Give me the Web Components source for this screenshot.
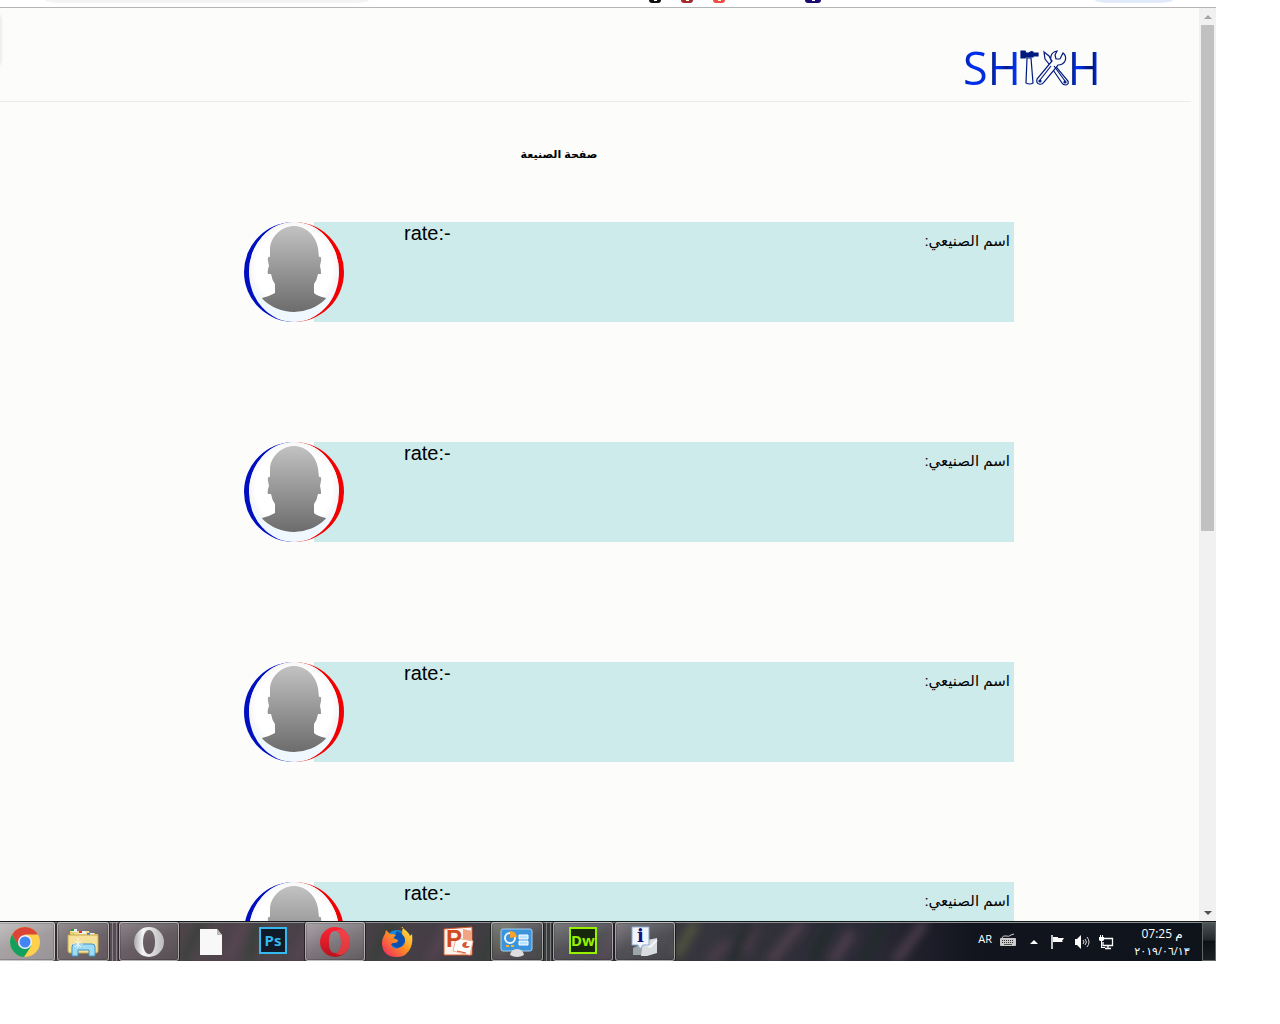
<!DOCTYPE html>
<html lang="ar">
<head>
<meta charset="utf-8">
<title>صفحة الصنيعة</title>
<style>
body { margin: 0; padding-right: 64px; background: #fff; font-family: "Liberation Sans", "DejaVu Sans", sans-serif; color: #000; }
</style>
</head>
<body>
<desktop-screen>
  <browser-strip slot="top"></browser-strip>
  <web-page slot="page">
    <site-header></site-header>
    <page-title>صفحة الصنيعة</page-title>
    <worker-list>
      <worker-card><span slot="name">اسم الصنيعي:</span><span slot="rate">rate:-</span></worker-card>
      <worker-card><span slot="name">اسم الصنيعي:</span><span slot="rate">rate:-</span></worker-card>
      <worker-card><span slot="name">اسم الصنيعي:</span><span slot="rate">rate:-</span></worker-card>
      <worker-card><span slot="name">اسم الصنيعي:</span><span slot="rate">rate:-</span></worker-card>
    </worker-list>
  </web-page>
  <scroll-bar slot="scroll"></scroll-bar>
  <task-bar slot="taskbar">
    <task-button icon="chrome" label="Chrome" look="active"></task-button>
    <task-button icon="explorer" label="Explorer" look="stack"></task-button>
    <task-button icon="operagrey" label="Opera Developer" look="open"></task-button>
    <task-button icon="file" label="File"></task-button>
    <task-button icon="ps" label="Photoshop"></task-button>
    <task-button icon="opera" label="Opera" look="bright"></task-button>
    <task-button icon="firefox" label="Firefox"></task-button>
    <task-button icon="ppt" label="PowerPoint"></task-button>
    <task-button icon="panel" label="Control Panel" look="stack"></task-button>
    <task-button icon="dw" label="Dreamweaver" look="open"></task-button>
    <task-button icon="info" label="Information" look="open"></task-button>
    <system-tray slot="tray"></system-tray>
  </task-bar>
</desktop-screen>
<script>
const define = (name, html) => customElements.define(name, class extends HTMLElement {
  constructor() { super(); this.attachShadow({ mode: 'open' }); }
  connectedCallback() {
    this.shadowRoot.innerHTML = typeof html === 'function' ? html(this) : html;
  }
});

define('desktop-screen', `
<style>
:host { display: flex; flex-direction: column; height: calc(100vh - 63px); overflow: hidden; }
.window { display: flex; flex: 1; min-height: 0; }
.page { flex: 1; min-width: 0; overflow: hidden; background: #fcfcfa; }
</style>
<slot name="top"></slot>
<div class="window"><div class="page"><slot name="page"></slot></div><slot name="scroll"></slot></div>
<slot name="taskbar"></slot>`);

define('browser-strip', `
<style>
:host { display: flex; justify-content: space-between; height: 7px; border-bottom: 1px solid #b5b5b5; background: #fff; flex: none; }
.left, .marks { display: flex; }
.pill { height: 3px; border-radius: 0 0 16px 16px / 0 0 3px 3px; background: #f1f3f4; }
.url { width: 324px; margin-left: 45px; }
.user { width: 78px; margin-right: 43px; background: #e1eaf8; }
.marks { margin-left: 280px; gap: 20px; }
i { width: 12px; height: 3px; border-radius: 0 0 3px 3px; background: linear-gradient(#fff, #fff) center top / 3px 1px no-repeat var(--c); }
i.wide { width: 16px; margin-left: 60px; }
</style>
<div class="left"><div class="pill url"></div>
<div class="marks"><i style="--c:#111"></i><i style="--c:#a52a2a"></i><i style="--c:#f04e3e"></i><i class="wide" style="--c:#1d0a72"></i></div></div>
<div class="pill user"></div>`);

define('web-page', `
<style>
:host { display: block; position: relative; padding-right: 8px; }
.drawer { position: absolute; left: -10px; top: 8px; width: 10px; height: 48px; box-shadow: 0 0 4px rgba(0,0,0,.15); }
</style>
<div class="drawer"></div><slot></slot>`);

define('site-header', `
<style>
:host { display: flex; justify-content: flex-end; border-bottom: 1px solid #ebebeb; padding: 29px 90px 3px 0; }
.logo { display: flex; align-items: center; font: 500 45px/61px "Open Sans", sans-serif; }
span { background: linear-gradient(90deg, #001a9a, #0030f5 15%, #0028d0 45%, #001470 50%, #0034ff 57%, #001a90 75%, #0034ff 92%, #0034ff); -webkit-background-clip: text; background-clip: text; color: transparent; }
.end { background-image: linear-gradient(90deg, #001470 12%, #0034ff 24%, #001a90 60%, #001470 76%, #0034ff 88%); }
svg { display: block; margin: 1px -4px 0 -1px; }
</style>
<div class="logo"><span>SH</span>
<svg width="52" height="36" viewBox="0 0 52 36" fill="none" stroke="#001a80" stroke-width="1.2">
<path fill="#001a80" d="M1 1h4l1 2h3q2-2 4-1v1h5v3h-5v1H6L5 8H1z"/>
<path d="M7 8h4l2 25q-3 2-7 0z"/>
<path fill="#fcfcfa" d="M24 2l5 4 3 6 16 19q1 3-2 4-3 0-4-2L29 14l-4-5z"/>
<path fill="#fcfcfa" d="M37 1q-5 1-6 5-1 3 1 5L17 29q-1 4 2 5 3 1 5-2l14-17q5 0 7-4 2-5-2-8l-3 6-4 0-1-4z"/>
<path d="M20 30l11-14M34 16l11 15"/><circle cx="20" cy="31" r="1" fill="#001a80"/><circle cx="45" cy="32" r="1" fill="#001a80"/>
</svg><span class="end">H</span></div>`);

define('page-title', `
<style>
:host { display: block; padding: 42px 73px 0 0; }
h1 { margin: 0; text-align: center; font-size: 11px; line-height: 20px; font-weight: bold; }
</style>
<h1 dir="rtl"><slot></slot></h1>`);

define('worker-list', `
<style>
:host { display: flex; flex-direction: column; gap: 120px; padding: 58px 177px 0 0; align-items: flex-end; }
</style><slot></slot>`);

define('worker-card', `
<style>
:host { display: flex; }
.avatar { box-sizing: border-box; width: 100px; height: 100px; margin-right: -30px; border: 0 solid; border-width: 0 5px; border-color: #0010c0 #f00000 #f00000 #0010c0; border-radius: 50%; background: #f0f8ff; position: relative; overflow: hidden; }
svg { display: block; border-radius: 50%; }
.bar { box-sizing: border-box; display: flex; justify-content: space-between; align-items: flex-start; width: 700px; height: 100px; padding: 0 4px 0 90px; background: #ceebeb; }
.rate { font-size: 20px; line-height: 23px; }
.name { font-size: 15px; line-height: 24px; padding-top: 7px; }
</style>
<div class="avatar"><svg width="90" height="90" viewBox="0 0 90 90">
<defs><linearGradient id="g" x2="0" y2="1"><stop stop-color="#c2c2c2"/><stop offset="1" stop-color="#6c6c6c"/></linearGradient>
<radialGradient id="w"><stop offset=".85" stop-color="#fff"/><stop offset="1" stop-color="#f5f5f5"/></radialGradient></defs>
<rect width="90" height="90" fill="url(#w)"/>
<path fill="url(#g)" d="M45 4C33 4 22 14 21 26l0 9q-3-1-2 4l1 5q-2 5-1 8l3 0q1 6 4 10v9q-5 3-13 5l5 14h54l5-14q-9-2-12-5v-9q3-4 4-10l3 0q0-5-1-8l1-5q1-5-2-4l-1-9C67 14 57 4 45 4z"/>
</svg></div>
<div class="bar"><div class="rate"><slot name="rate"></slot></div><div class="name" dir="rtl"><slot name="name"></slot></div></div>`);

define('scroll-bar', `
<style>
:host { display: flex; flex-direction: column; width: 17px; background: #f1f1f1; }
button { height: 17px; border: 0; padding: 0; background: none; display: flex; align-items: center; justify-content: center; }
.track { flex: 1; padding: 0 2px; }
.thumb { height: 57.6%; background: #c1c1c1; }
</style>
<button aria-label="Up"><svg width="8" height="4"><path d="M4 0l4 4H0z" fill="#a3a3a3"/></svg></button>
<div class="track"><div class="thumb"></div></div>
<button aria-label="Down"><svg width="8" height="4"><path d="M0 0h8L4 4z" fill="#505050"/></svg></button>`);

define('task-bar', `
<style>
:host { box-sizing: border-box; display: flex; justify-content: space-between; height: 40px; flex: none; overflow: hidden; position: relative; border-top: 1px solid #15181a; background: #2b2a33; color: #fff; }
.back { position: absolute; inset: 0; width: 100%; height: 100%; }
.items { display: flex; gap: 2px; margin-left: -5px; position: relative; }
.tray { display: flex; position: relative; }
</style>
<svg class="back" preserveAspectRatio="none" viewBox="0 0 1216 39">
<defs><linearGradient id="b"><stop stop-color="#6c6568"/><stop offset=".12" stop-color="#51464c"/><stop offset=".35" stop-color="#453e45"/><stop offset=".52" stop-color="#3a3a40"/><stop offset=".72" stop-color="#2b2a36"/><stop offset=".8" stop-color="#12141e"/><stop offset="1" stop-color="#0e141b"/></linearGradient>
<filter id="f" x="-10%" y="-50%" width="120%" height="200%"><feGaussianBlur stdDeviation="5"/></filter></defs>
<rect width="1216" height="40" fill="url(#b)"/>
<g filter="url(#f)" stroke-width="9" opacity=".75">
<path stroke="#304034" d="M182 40l20-40M248 40l10-40M372 40l20-40M480 40l20-40M540 40l15-40"/>
<path stroke="#5c4656" d="M115 40l8-40M225 40l20-40M295 40l20-40M430 40l20-40M770 40l32-40M832 40l20-30M895 40l30-40"/>
<path stroke="#5f613f" d="M676 34l20-34M500 30l10-30"/>
<path stroke="#544050" d="M708 40l20-20M745 30l10-30M602 40l20-40"/>
<path stroke="#1d2a26" d="M730 40l22-40M810 40l22-40M862 40l22-40"/>
</g><path d="M0 .500h1216" stroke="#8a8f90"/></svg>
<div class="items"><slot></slot></div><div class="tray"><slot name="tray"></slot></div>`);

const icons = {
chrome: `<svg width="32" height="32" viewBox="0 0 32 32"><circle cx="16" cy="16" r="15" fill="#ffd04b"/><path d="M3 8.500A15 15 0 0 1 29 8.500H16L9.500 20z" fill="#db4437"/><path d="M3 8.500A15 15 0 0 0 15 31l7.500-11.500-13 0z" fill="#13a05f"/><circle cx="16" cy="16" r="7" fill="#eef3f8"/><circle cx="16" cy="16" r="5.500" fill="#4285f4"/></svg>`,
explorer: `<svg width="34" height="32" viewBox="0 0 34 32"><path d="M4 5h9l2 2h14v18H4z" fill="#e6cc73"/><path d="M13 5h10l1 3h8v18H8V7z" fill="#f0dc91"/><path d="M5 3h6v3H5z" fill="#eee"/><path d="M5 3h3v2H5z" fill="#13a31b"/><path d="M13 5h7v3h-7z" fill="#eee"/><path d="M13 5h3v2h-3z" fill="#d33"/><path d="M21 7h7v3h-7z" fill="#eee"/><path d="M21 7h3v2h-3z" fill="#28d"/><path d="M2 9h30v16q0 2-2 2H4q-2 0-2-2z" fill="#f5e19a" stroke="#caa84e"/><path d="M6 30v-9q0-3 3-3h17q3 0 3 3v9h-6v-6H12v6z" fill="#9fdcf4" stroke="#3b95c4"/><path d="M12 12v10M7 18h10M9 15l6 6M15 15l-6 6" stroke="#fff" opacity=".8"/></svg>`,
operagrey: `<svg width="32" height="32" viewBox="0 0 32 32"><defs><linearGradient id="o" x2="1"><stop stop-color="#aaa"/><stop offset=".3" stop-color="#f6f6f6"/><stop offset="1" stop-color="#bbb"/></linearGradient></defs><path fill-rule="evenodd" fill="url(#o)" d="M16 1a15 15 0 1 0 0 30 15 15 0 1 0 0-30zM16 4C20 4 22 10 22 16S20 28 16 28 10 22 10 16 12 4 16 4z"/></svg>`,
file: `<svg width="24" height="28" viewBox="0 0 24 28"><path d="M1 1h17l5 6v20H1z" fill="#f8f8f8"/><path d="M18 1v6h5z" fill="#bbb"/></svg>`,
ps: `<b class="sq" style="--b:#35b9ee;--g:#101a29">Ps</b>`,
dw: `<b class="sq" style="--b:#96f000;--g:#17280e">Dw</b>`,
opera: `<svg width="32" height="32" viewBox="0 0 32 32"><defs><linearGradient id="o" x2="0" y2="1"><stop stop-color="#ff2535"/><stop offset="1" stop-color="#b8121e"/></linearGradient></defs><path fill-rule="evenodd" fill="url(#o)" d="M16 1a15 15 0 1 0 0 30 15 15 0 1 0 0-30zM16 5C21 5 22 11 22 16S21 27 16 27 10 21 10 16 11 5 16 5z"/><path fill="#f55b5b" opacity=".5" d="M16 5q6-4 11 1 4 4 4 10t-5 11q-5 4-10 0c5 0 6-6 6-11S21 5 16 5z"/></svg>`,
firefox: `<svg width="32" height="32" viewBox="0 0 32 32"><defs><linearGradient id="f" x1="1" x2="0" y2="1"><stop stop-color="#fff04a"/><stop offset=".45" stop-color="#ff9520"/><stop offset="1" stop-color="#f01e68"/></linearGradient></defs><circle cx="16" cy="15" r="11" fill="#1486dc"/><path fill="#0c4fae" d="M16 5q8 3 9 10l-7 8-8-4z"/><path fill="url(#f)" d="M20 1q7 4 9 9l2-2q1 8-1 13-4 10-14 10Q2 31 1 18q0-6 3-10l1-4 4 4q4 0 6 1l-3 3 5 2q0 3-4 3-2 0-3 1 2 6 7 4 4-1 6-3 3-6-2-11 0-4 1-7z"/></svg>`,
ppt: `<svg width="32" height="32" viewBox="0 0 32 32"><path d="M1 3l28-2v28H1z" fill="#fdf4ee" stroke="#d8572c"/><path d="M20 3l9 2v12H20z" fill="#f2a585"/><path d="M13 12l17 3-3 14-17-4z" fill="#fff" stroke="#f0b090"/><path d="M24 16a4 3 0 1 0 3 4h-4z" fill="#d8572c"/><path d="M14 25l9 2" stroke="#d8572c"/><text x="3" y="21" font-family="Liberation Sans" font-weight="bold" font-size="24" fill="#d14a1e">P</text></svg>`,
panel: `<svg width="34" height="32" viewBox="0 0 34 32"><rect x="1" y="3" width="31" height="22" rx="2" fill="#3b94dc" stroke="#9fd2f5"/><circle cx="10" cy="12" r="5" fill="#3b94dc" stroke="#e8f4ff" stroke-width="2"/><path d="M10 12V5q6 0 7 6z" fill="#f9a32a"/><path d="M19 9h9v4h-9zM19 15h9v4h-9z" fill="#b9e4ff" stroke="#fff"/><path d="M6 20h3M11 20h3" stroke="#ffb52a" stroke-width="2"/><path d="M10 29q1-6 7-6t7 6q-7 4-14 0z" fill="#dedede"/></svg>`,
info: `<svg width="32" height="32" viewBox="0 0 32 32"><path d="M4 22l6-3h10v10H4z" fill="#9da4aa"/><path d="M14 15l14-3v15l-10 3h-6z" fill="#d9dcdf"/><path d="M14 17l7 4 7-7" fill="none" stroke="#f5f5f5" stroke-width="2"/><path d="M3 1h17v18h-6l-3 4-2-4H3z" fill="#f0f5fc" stroke="#8ca9cf"/><text x="8" y="16" font-family="DejaVu Serif" font-weight="bold" font-size="18" fill="#101080">i</text></svg>`
};
define('task-button', el => `
<style>
:host { display: flex; width: 60px; height: 39px; }
button { box-sizing: border-box; flex: 1; min-width: 0; margin: 0; padding: 0; border: 1px solid transparent; background: none; display: flex; align-items: center; justify-content: center; border-radius: 3px; }
.open, .active, .bright, .stack { border-color: rgba(215,215,210,.6); box-shadow: inset 0 0 0 1px rgba(0,0,0,.15), 0 0 0 1px rgba(0,0,0,.5); background: linear-gradient(160deg, rgba(255,255,255,.32), rgba(255,255,255,.12) 50%, rgba(255,255,255,.06)); }
.bright { background: linear-gradient(160deg, rgba(255,255,255,.5), rgba(255,255,255,.3) 50%, rgba(255,255,255,.15)); }
.active { background: linear-gradient(160deg, rgba(255,255,255,.6), rgba(255,255,255,.4) 50%, rgba(255,255,255,.35)); }
.tail { display: flex; }
.tail i { width: 3px; border-right: 1px solid rgba(170,165,170,.6); }
.sq { box-sizing: border-box; width: 28px; height: 27px; margin-bottom: 3px; border: 2px solid var(--b); background: var(--g); color: var(--b); font: bold 15px/23px "Noto Sans", sans-serif; text-align: center; display: flex; justify-content: center; }
svg { display: block; flex: none; }
</style>
<button class="${el.getAttribute('look') || ''}" aria-label="${el.getAttribute('label')}">${icons[el.getAttribute('icon')]}</button>
${el.getAttribute('look') === 'stack' ? '<div class="tail"><i></i><i></i></div>' : ''}`);

define('system-tray', `
<style>
:host { display: flex; align-items: center; font: 12px/17px "Open Sans", "DejaVu Sans", sans-serif; color: #fff; }
.icons { display: flex; align-items: center; gap: 8px; margin-right: 16px; }
.lang { font-size: 11px; padding-bottom: 6px; }
.keys { margin: 0 2px 4px 0; }
svg { display: block; }
.clock { width: 64px; text-align: center; margin-right: 8px; white-space: nowrap; }
.time { font-size: 12px; }
.date { font-size: 11px; }
button { box-sizing: border-box; width: 14px; height: 39px; padding: 0; border: 1px solid #606668; background: linear-gradient(#4b5254, #23292c 45%, #0d1215 50%, #1a2023); }
</style>
<div class="icons">
<span class="lang">AR</span>
<svg class="keys" width="16" height="14" viewBox="0 0 16 14"><path d="M2 5q1-3 4-2t5-1l3-1" fill="none" stroke="#ccc"/><rect x="0" y="5" width="16" height="8" rx="1" fill="#ccc"/><path d="M2 7.500h12M2 9.500h12" stroke="#333" stroke-dasharray="1 1"/><path d="M4 11.500h8" stroke="#555"/></svg>
<svg width="16" height="6" viewBox="0 0 16 6"><path d="M8 1l4 4H4z" fill="#fff"/></svg>
<svg width="16" height="16" viewBox="0 0 16 16"><path d="M2 1v14" stroke="#fff" stroke-width="1.500"/><path d="M3 3h5v1h6l-2 3 1 1H8V8H3z" fill="#fff"/></svg>
<svg width="16" height="16" viewBox="0 0 16 16"><path d="M1 5h2l4-4v14l-4-4H1z" fill="#fff"/><path d="M9 6q2 2 0 4M11 5q3 3 0 6M13 3q4 5 0 10" fill="none" stroke="#ddd"/></svg>
<svg width="16" height="16" viewBox="0 0 16 16"><path d="M6 4.500h8.500v7H5V8M7 14.500h6M10 12v2" fill="none" stroke="#fff" stroke-width="1.300"/><path d="M1 3h5v3L5 7H2L1 6zM2 1h1v2H2zM4 1h1v2H4zM3 7h1v6h3v1H3z" fill="#fff"/></svg>
</div>
<div class="clock"><div class="time">07:25 م</div><div class="date">٢٠١٩/٠٦/١٣</div></div>
<button aria-label="Show desktop"></button>`);
</script>
</body>
</html>
